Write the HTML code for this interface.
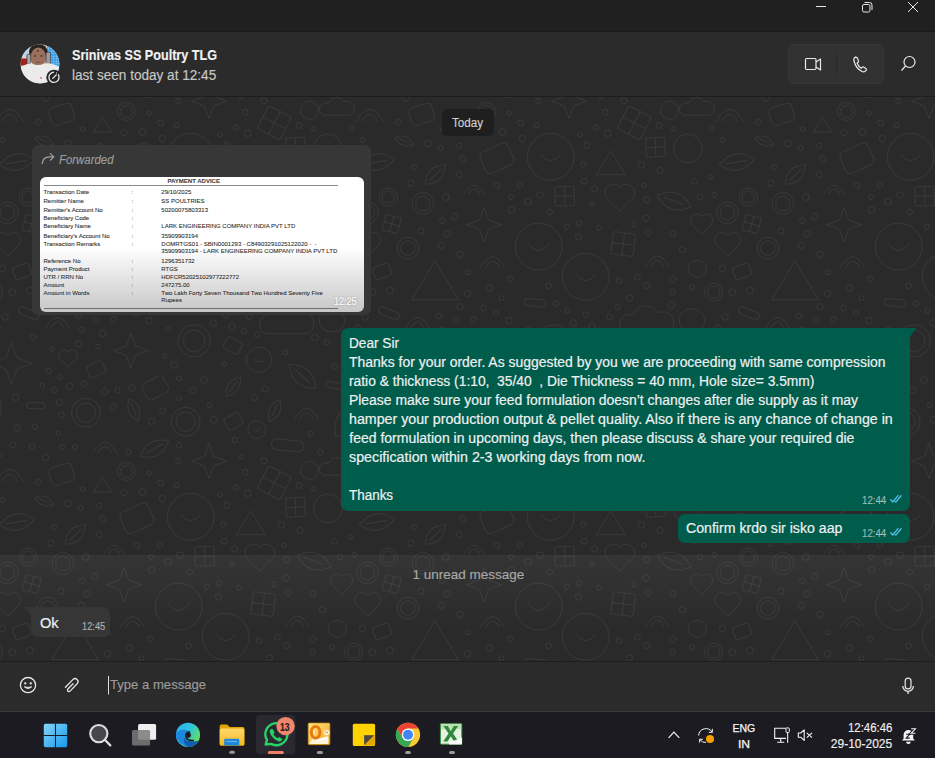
<!DOCTYPE html>
<html><head><meta charset="utf-8">
<style>
*{margin:0;padding:0;box-sizing:border-box}
html,body{width:935px;height:758px;overflow:hidden;background:#292929;font-family:"Liberation Sans",sans-serif}
.abs{position:absolute}
.t{position:absolute;white-space:pre;line-height:1;transform-origin:0 0;-webkit-text-stroke-width:0.15px}
svg{position:absolute;overflow:visible}
#titlebar{left:0;top:0;width:935px;height:32px;background:#202020;border-bottom:1px solid #1b1b1b}
#header{left:0;top:32px;width:935px;height:65px;background:#2b2b2b;border-bottom:1px solid #1d1d1d}
#chat{left:0;top:97px;width:935px;height:564px;background:#2a2a2a;overflow:hidden}
#composer{left:0;top:661px;width:935px;height:50px;background:#2b2b2b;border-top:1px solid #1e1e1e}
#taskbar{left:0;top:711px;width:935px;height:47px;background:#1c1b22;border-top:1px solid #3a3a3e}
.msg{color:#edf0f1;font-size:14px;-webkit-text-stroke:0.2px #edf0f1}
.time{color:rgba(233,237,239,.6);font-size:11px;transform:scaleX(0.88)}
.doc{color:#2a2a2a;font-size:6px;-webkit-text-stroke:0.08px #2a2a2a}
</style></head><body>
<!-- title bar -->
<div id="titlebar" class="abs"></div>
<svg style="left:0;top:0" width="935" height="32">
  <line x1="816" y1="6.5" x2="826" y2="6.5" stroke="#e6e6e6" stroke-width="1"/>
  <rect x="862.5" y="4.5" width="7.5" height="7.5" rx="1.5" fill="none" stroke="#e6e6e6" stroke-width="1"/>
  <path d="M864.5 2.5 h5 a2.5 2.5 0 0 1 2.5 2.5 v5" fill="none" stroke="#e6e6e6" stroke-width="1"/>
  <path d="M908 2 L918 12 M918 2 L908 12" stroke="#e6e6e6" stroke-width="1"/>
</svg>
<!-- header -->
<div id="header" class="abs"></div>
<svg style="left:0;top:0" width="100" height="96">
  <defs><clipPath id="av"><circle cx="40" cy="64" r="19.4"/></clipPath>
  <pattern id="dots" width="2.5" height="2.5" patternUnits="userSpaceOnUse"><rect width="2.5" height="2.5" fill="#3d9ee6"/><circle cx="1.25" cy="1.25" r="0.6" fill="#bfe0f5"/></pattern></defs>
  <g clip-path="url(#av)">
    <rect x="20" y="44" width="40" height="40" fill="#d4d6d8"/>
    <path d="M20 44 h12 l-4 10 l-8 4z" fill="#b9d3e6"/>
    <rect x="47" y="44" width="14" height="28" fill="url(#dots)"/>
    <rect x="20" y="58.5" width="7" height="7" fill="#a8201c"/>
    <path d="M29 52 q1 -8 9 -8 q9 0 10 9 l-1 3 h-17z" fill="#2a221e"/>
    <ellipse cx="38.3" cy="57.5" rx="7.8" ry="10" fill="#9a705c"/>
    <circle cx="37.8" cy="51" r="0.9" fill="#3a3a44"/>
    <ellipse cx="35" cy="56" rx="1.2" ry="0.8" fill="#3a2a24"/>
    <ellipse cx="41.5" cy="56" rx="1.2" ry="0.8" fill="#3a2a24"/>
    <path d="M35.5 62 q2.5 1 5 0" stroke="#6a4a40" stroke-width="0.8" fill="none"/>
    <rect x="26.9" y="54.2" width="3.8" height="9.5" rx="1.5" fill="#a6a6a6" stroke="#333" stroke-width="0.7"/>
    <rect x="46" y="52" width="4.6" height="13.5" rx="1.8" fill="#9a9a9a" stroke="#333" stroke-width="0.7"/>
    <path d="M20 68 q6 -5 12 -4.5 q6 3 12 0 q8 -1 16 4 v16 h-40z" fill="#ecebeb"/>
    <path d="M20 72 q3 4 5 9" stroke="#444" stroke-width="1.5" fill="none"/>
    <circle cx="41" cy="78" r="0.8" fill="#b03030"/>
  </g>
  <circle cx="53.9" cy="77.3" r="7.6" fill="#262626"/>
  <path d="M58.2 74.4 A5.1 5.1 0 1 1 54 72.2" fill="none" stroke="#ececec" stroke-width="1.3"/>
  <circle cx="56.6" cy="72.9" r="0.55" fill="#ececec"/><circle cx="58.6" cy="75" r="0.55" fill="#ececec"/>
  <line x1="52.8" y1="78.4" x2="56.3" y2="74.9" stroke="#ececec" stroke-width="1.3" stroke-linecap="round"/>
</svg>
<div class="t" style="left:72px;top:48px;font-size:14px;font-weight:bold;color:#f2f2f2;transform:scaleX(0.9)">Srinivas SS Poultry TLG</div>
<div class="t" style="left:72px;top:68px;font-size:14px;color:#c8c8c8;transform:scaleX(0.97)">last seen today at 12:45</div>
<div class="abs" style="left:788px;top:44px;width:96px;height:40px;background:#323232;border:1px solid #373737;border-radius:5px"></div>
<div class="abs" style="left:836px;top:52px;width:1px;height:24px;background:#2a2a2a"></div>
<svg style="left:0;top:0" width="935" height="96">
  <rect x="805.5" y="58.5" width="10.5" height="11" rx="1.2" fill="none" stroke="#eaeaea" stroke-width="1.2"/>
  <path d="M816 62 l4.5 -3 v11 l-4.5 -3" fill="none" stroke="#eaeaea" stroke-width="1.2" stroke-linejoin="round"/>
  <path d="M855.5 57 c-1.5 0.5 -2 2 -1.5 4 c1 4 4 8.5 8 10.5 c1.5 0.7 3 0.3 3.8 -0.8 l0.5 -0.8 c0.3 -0.5 0.1 -1.1 -0.4 -1.4 l-2.3 -1.4 c-0.5 -0.3 -1 -0.2 -1.4 0.2 l-0.8 0.9 c-2 -1 -3.5 -3 -4.3 -5.2 l1 -0.7 c0.5 -0.3 0.6 -0.9 0.4 -1.4 l-1.1 -2.7 c-0.2 -0.6 -0.8 -0.9 -1.4 -0.7 z" fill="none" stroke="#eaeaea" stroke-width="1.2"/>
  <circle cx="909.5" cy="62" r="5.5" fill="none" stroke="#eaeaea" stroke-width="1.2"/>
  <line x1="905.5" y1="66" x2="901.5" y2="70.5" stroke="#eaeaea" stroke-width="1.2"/>
</svg>
<!-- chat -->
<div id="chat" class="abs"></div>
<svg style="left:0;top:97px" width="935" height="564"><defs><pattern id="dd" width="360" height="360" patternUnits="userSpaceOnUse"><g fill="none" stroke="#383838" stroke-width="1"><circle cx="224.2" cy="267.0" r="2.4"/><g transform="rotate(42 302.5 279.3)"><path d="M284.5 279.3 q18.0 -16.2 36.0 0 q-18.0 16.2 -36.0 0z M291.7 279.3 h21.6"/></g><rect x="225.1" y="317.8" width="17.0" height="13.0" rx="3.0" transform="rotate(-29 233.6 324.3)"/><g transform="rotate(69 133.8 312.6)"><path d="M121.8 312.6 q12.0 -10.8 24.0 0 q-12.0 10.8 -24.0 0z M126.6 312.6 h14.4"/></g><circle cx="195.8" cy="206.6" r="2.8"/><g transform="rotate(7 263.2 146.9)"><rect x="252.0" y="135.7" width="22.4" height="22.4" rx="2"/><path d="M263.2 135.7 v22.4 M252.0 146.9 h22.4"/></g><g transform="rotate(28 274.3 25.9)"><rect x="261.5" y="13.1" width="25.6" height="25.6" rx="2"/><path d="M274.3 13.1 v25.6 M261.5 25.9 h25.6"/></g><g transform="rotate(28 274.3 385.9)"><rect x="261.5" y="373.1" width="25.6" height="25.6" rx="2"/><path d="M274.3 373.1 v25.6 M261.5 385.9 h25.6"/></g><circle cx="45.6" cy="0.6" r="3.3"/><circle cx="45.6" cy="360.6" r="3.3"/><g transform="rotate(137 75.4 77.6)"><path d="M61.4 77.6 q14.0 -12.6 28.0 0 q-14.0 12.6 -28.0 0z M67.0 77.6 h16.8"/></g><g transform="rotate(19 314.1 104.1)"><path d="M296.1 104.1 q18.0 -16.2 36.0 0 q-18.0 16.2 -36.0 0z M303.3 104.1 h21.6"/></g><circle cx="194.1" cy="244.0" r="16.2"/><circle cx="194.1" cy="244.0" r="10.8"/><g transform="rotate(125 348.0 321.7)"><path d="M326.0 321.7 q22.0 -19.8 44.0 0 q-22.0 19.8 -44.0 0z M334.8 321.7 h26.4"/></g><g transform="rotate(125 -12.0 321.7)"><path d="M-34.0 321.7 q22.0 -19.8 44.0 0 q-22.0 19.8 -44.0 0z M-25.2 321.7 h26.4"/></g><path d="M7.8 159.2 l-11.2 -11.2 a5.6 5.6 0 0 1 11.2 -9.8 a5.6 5.6 0 0 1 11.2 9.8z" stroke-linejoin="round"/><path d="M367.8 159.2 l-11.2 -11.2 a5.6 5.6 0 0 1 11.2 -9.8 a5.6 5.6 0 0 1 11.2 9.8z" stroke-linejoin="round"/><circle cx="95.0" cy="119.5" r="3.2"/><path d="M250.7 53.7 L265.1 77.7 L236.3 77.7z" stroke-linejoin="round"/><path d="M341.7 137.2 l-9.6 -9.6 a4.8 4.8 0 0 1 9.6 -8.4 a4.8 4.8 0 0 1 9.6 8.4z" stroke-linejoin="round"/><path d="M-18.3 137.2 l-9.6 -9.6 a4.8 4.8 0 0 1 9.6 -8.4 a4.8 4.8 0 0 1 9.6 8.4z" stroke-linejoin="round"/><g transform="rotate(170 16.8 65.1)"><path d="M-1.2 65.1 q18.0 -16.2 36.0 0 q-18.0 16.2 -36.0 0z M6.0 65.1 h21.6"/></g><g transform="rotate(170 376.8 65.1)"><path d="M358.8 65.1 q18.0 -16.2 36.0 0 q-18.0 16.2 -36.0 0z M366.0 65.1 h21.6"/></g><polygon points="141.6,127.7 128.6,132.4 124.0,145.3 119.3,132.4 106.4,127.7 119.3,123.1 124.0,110.1 128.6,123.1" stroke-linejoin="round"/><circle cx="309.5" cy="13.2" r="9.0"/><circle cx="309.5" cy="373.2" r="9.0"/><path d="M75.1 163.8 L98.5 202.8 L51.7 202.8z" stroke-linejoin="round"/><path d="M265.6 236.7 a9.9 9.9 0 0 1 7.7 -18.7 a13.2 13.2 0 0 1 24.2 -2.2 a9.9 9.9 0 0 1 9.9 20.9z"/><rect x="18.3" y="212.6" width="21.6" height="7.2" rx="3.6" transform="rotate(22 29.1 216.2)"/><rect x="378.3" y="212.6" width="21.6" height="7.2" rx="3.6" transform="rotate(22 389.1 216.2)"/><polygon points="32.3,266.6 17.0,272.1 11.5,287.4 5.9,272.1 -9.3,266.6 5.9,261.1 11.5,245.8 17.0,261.1" stroke-linejoin="round"/><polygon points="392.3,266.6 377.0,272.1 371.5,287.4 365.9,272.1 350.7,266.6 365.9,261.1 371.5,245.8 377.0,261.1" stroke-linejoin="round"/><path d="M285.5 170.0 q12.0 -21.6 24.0 0 M290.3 170.0 q7.2 -13.2 14.4 0"/><circle cx="60.8" cy="134.3" r="3.1"/><path d="M319.3 223.3 c0 -15.4 25.2 -15.4 25.2 0 s-25.2 15.4 -25.2 0z"/><path d="M-40.7 223.3 c0 -15.4 25.2 -15.4 25.2 0 s-25.2 15.4 -25.2 0z"/><circle cx="225.7" cy="179.8" r="23.4"/><path d="M215.3 177.2 q10.4 13.0 20.8 0"/><polygon points="148.4,253.6 135.5,258.3 130.8,271.2 126.2,258.3 113.2,253.6 126.2,248.9 130.8,236.0 135.5,248.9" stroke-linejoin="round"/><polygon points="226.6,4.2 213.7,8.8 209.0,21.8 204.4,8.8 191.4,4.2 204.4,-0.5 209.0,-13.4 213.7,-0.5" stroke-linejoin="round"/><polygon points="226.6,364.2 213.7,368.8 209.0,381.8 204.4,368.8 191.4,364.2 204.4,359.5 209.0,346.6 213.7,359.5" stroke-linejoin="round"/><circle cx="190.6" cy="59.8" r="23.4"/><path d="M180.2 57.2 q10.4 13.0 20.8 0"/><path d="M328.5 171.8 c0 -11.0 18.0 -11.0 18.0 0 s-18.0 11.0 -18.0 0z"/><path d="M-31.5 171.8 c0 -11.0 18.0 -11.0 18.0 0 s-18.0 11.0 -18.0 0z"/><circle cx="259.1" cy="262.9" r="12.6"/><path d="M253.5 261.5 q5.6 7.0 11.2 0"/><circle cx="78.9" cy="246.9" r="3.0"/><circle cx="219.1" cy="126.4" r="2.8"/><g transform="rotate(151 154.5 351.6)"><path d="M138.5 351.6 q16.0 -14.4 32.0 0 q-16.0 14.4 -32.0 0z M144.9 351.6 h19.2"/></g><g transform="rotate(151 154.5 -8.4)"><path d="M138.5 -8.4 q16.0 -14.4 32.0 0 q-16.0 14.4 -32.0 0z M144.9 -8.4 h19.2"/></g><path d="M92.9 356.1 q12.0 -21.6 24.0 0 M97.7 356.1 q7.2 -13.2 14.4 0"/><path d="M92.9 -3.9 q12.0 -21.6 24.0 0 M97.7 -3.9 q7.2 -13.2 14.4 0"/><circle cx="178.7" cy="149.6" r="23.4"/><path d="M168.3 147.0 q10.4 13.0 20.8 0"/><path d="M259.7 114.1 l-12.8 -12.8 a6.4 6.4 0 0 1 12.8 -11.2 a6.4 6.4 0 0 1 12.8 11.2z" stroke-linejoin="round"/><circle cx="327.8" cy="51.4" r="14.4"/><g transform="rotate(21 44.4 44.0)"><path d="M34.4 44.0 q10.0 -9.0 20.0 0 q-10.0 9.0 -20.0 0z M38.4 44.0 h12.0"/></g><circle cx="235.8" cy="30.7" r="2.6"/><circle cx="85.9" cy="315.7" r="14.4"/><circle cx="85.9" cy="315.7" r="9.6"/><g transform="rotate(-3 295.4 50.3)"><rect x="285.8" y="40.7" width="19.2" height="19.2" rx="2"/><path d="M295.4 40.7 v19.2 M285.8 50.3 h19.2"/></g><g transform="rotate(126 233.2 289.6)"><path d="M221.2 289.6 q12.0 -10.8 24.0 0 q-12.0 10.8 -24.0 0z M226.0 289.6 h14.4"/></g><circle cx="142.4" cy="34.9" r="3.3"/><circle cx="179.1" cy="281.4" r="2.5"/><rect x="164.4" y="202.1" width="21.6" height="7.2" rx="3.6" transform="rotate(5 175.2 205.7)"/><rect x="271.4" y="343.0" width="32.4" height="10.8" rx="5.4" transform="rotate(5 287.6 348.4)"/><rect x="271.4" y="-17.0" width="32.4" height="10.8" rx="5.4" transform="rotate(5 287.6 -11.6)"/><circle cx="151.4" cy="113.0" r="3.2"/><circle cx="12.3" cy="195.3" r="3.4"/><circle cx="372.3" cy="195.3" r="3.4"/><path d="M-4.1 25.2 q14.0 -25.2 28.0 0 M1.5 25.2 q8.4 -15.4 16.8 0"/><path d="M-4.1 385.2 q14.0 -25.2 28.0 0 M1.5 385.2 q8.4 -15.4 16.8 0"/><path d="M355.9 25.2 q14.0 -25.2 28.0 0 M361.5 25.2 q8.4 -15.4 16.8 0"/><path d="M355.9 385.2 q14.0 -25.2 28.0 0 M361.5 385.2 q8.4 -15.4 16.8 0"/><rect x="49.8" y="8.3" width="23.8" height="18.2" rx="4.2" transform="rotate(-17 61.7 17.4)"/><rect x="49.8" y="368.3" width="23.8" height="18.2" rx="4.2" transform="rotate(-17 61.7 377.4)"/><circle cx="132.0" cy="291.2" r="3.3"/><circle cx="288.1" cy="135.5" r="3.1"/><path d="M102.3 20.0 L111.3 35.0 L93.3 35.0z" stroke-linejoin="round"/><path d="M102.3 380.0 L111.3 395.0 L93.3 395.0z" stroke-linejoin="round"/><circle cx="334.5" cy="84.4" r="2.8"/><circle cx="-25.5" cy="84.4" r="2.8"/><rect x="224.2" y="242.0" width="17.0" height="13.0" rx="3.0" transform="rotate(28 232.7 248.5)"/><rect x="13.6" y="168.0" width="17.0" height="13.0" rx="3.0" transform="rotate(-22 22.1 174.5)"/><rect x="373.6" y="168.0" width="17.0" height="13.0" rx="3.0" transform="rotate(-22 382.1 174.5)"/><circle cx="256.7" cy="332.7" r="9.0"/><path d="M252.7 331.7 q4.0 5.0 8.0 0"/><circle cx="256.7" cy="-27.3" r="9.0"/><path d="M252.7 -28.3 q4.0 5.0 8.0 0"/><circle cx="69.8" cy="289.3" r="3.2"/><circle cx="277.5" cy="180.1" r="2.9"/><path d="M323.5 18.2 a6.3 6.3 0 0 1 4.9 -11.9 a8.4 8.4 0 0 1 15.4 -1.4 a6.3 6.3 0 0 1 6.3 13.3z"/><path d="M323.5 378.2 a6.3 6.3 0 0 1 4.9 -11.9 a8.4 8.4 0 0 1 15.4 -1.4 a6.3 6.3 0 0 1 6.3 13.3z"/><path d="M-36.5 18.2 a6.3 6.3 0 0 1 4.9 -11.9 a8.4 8.4 0 0 1 15.4 -1.4 a6.3 6.3 0 0 1 6.3 13.3z"/><path d="M-36.5 378.2 a6.3 6.3 0 0 1 4.9 -11.9 a8.4 8.4 0 0 1 15.4 -1.4 a6.3 6.3 0 0 1 6.3 13.3z"/><g transform="rotate(-1 204.7 99.2)"><rect x="195.1" y="89.6" width="19.2" height="19.2" rx="2"/><path d="M204.7 89.6 v19.2 M195.1 99.2 h19.2"/></g><circle cx="249.7" cy="220.0" r="2.9"/><circle cx="185.7" cy="324.7" r="14.4"/><circle cx="185.7" cy="324.7" r="9.6"/><g transform="rotate(15 31.8 127.0)"><rect x="23.8" y="119.0" width="16.0" height="16.0" rx="2"/><path d="M31.8 119.0 v16.0 M23.8 127.0 h16.0"/></g><rect x="26.9" y="305.8" width="18.0" height="6.0" rx="3.0" transform="rotate(2 35.9 308.8)"/><rect x="121.6" y="49.6" width="30.6" height="23.4" rx="5.4" transform="rotate(-25 136.9 61.3)"/><circle cx="47.8" cy="151.2" r="10.8"/><circle cx="47.8" cy="151.2" r="7.2"/><g transform="rotate(115 274.6 313.5)"><path d="M262.6 313.5 q12.0 -10.8 24.0 0 q-12.0 10.8 -24.0 0z M267.4 313.5 h14.4"/></g><circle cx="141.6" cy="201.2" r="2.5"/><path d="M45.5 231.3 q12.0 -21.6 24.0 0 M50.3 231.3 q7.2 -13.2 14.4 0"/><circle cx="12.8" cy="347.7" r="3.2"/><circle cx="12.8" cy="-12.3" r="3.2"/><circle cx="372.8" cy="347.7" r="3.2"/><circle cx="372.8" cy="-12.3" r="3.2"/><circle cx="102.4" cy="236.3" r="3.3"/><circle cx="315.1" cy="240.4" r="3.5"/><circle cx="58.4" cy="336.3" r="2.2"/><circle cx="58.4" cy="-23.7" r="2.2"/><rect x="143.4" y="281.8" width="23.8" height="18.2" rx="4.2" transform="rotate(-28 155.3 290.9)"/><circle cx="203.8" cy="282.8" r="3.4"/><circle cx="322.3" cy="152.7" r="3.1"/><circle cx="265.4" cy="292.0" r="3.0"/><circle cx="100.1" cy="157.3" r="3.3"/><circle cx="327.1" cy="245.1" r="2.7"/><circle cx="61.4" cy="318.3" r="2.9"/><circle cx="354.3" cy="97.7" r="2.3"/><circle cx="-5.7" cy="97.7" r="2.3"/><circle cx="227.0" cy="48.2" r="3.1"/><circle cx="126.5" cy="14.5" r="9.0"/><circle cx="126.5" cy="14.5" r="6.0"/><circle cx="126.5" cy="374.5" r="9.0"/><circle cx="126.5" cy="374.5" r="6.0"/><path d="M120.5 170.5 q12.0 -21.6 24.0 0 M125.3 170.5 q7.2 -13.2 14.4 0"/><circle cx="5.1" cy="219.9" r="3.2"/><circle cx="365.1" cy="219.9" r="3.2"/><path d="M68.1 269.8 l-8.0 -8.0 a4.0 4.0 0 0 1 8.0 -7.0 a4.0 4.0 0 0 1 8.0 7.0z" stroke-linejoin="round"/><circle cx="113.4" cy="222.2" r="2.7"/><circle cx="178.3" cy="4.0" r="2.7"/><circle cx="178.3" cy="364.0" r="2.7"/><circle cx="28.4" cy="100.1" r="9.0"/><circle cx="28.4" cy="100.1" r="6.0"/><circle cx="388.4" cy="100.1" r="9.0"/><circle cx="388.4" cy="100.1" r="6.0"/><circle cx="34.9" cy="329.7" r="2.6"/><circle cx="281.4" cy="67.8" r="3.5"/><circle cx="103.0" cy="61.8" r="3.2"/><circle cx="312.5" cy="195.3" r="2.9"/><circle cx="149.1" cy="223.6" r="3.2"/><rect x="87.6" y="265.9" width="17.0" height="13.0" rx="3.0" transform="rotate(-26 96.1 272.4)"/><circle cx="311.0" cy="336.8" r="2.5"/><circle cx="311.0" cy="-23.2" r="2.5"/><path d="M104.1 97.3 q10.0 -18.0 20.0 0 M108.1 97.3 q6.0 -11.0 12.0 0"/><circle cx="350.8" cy="80.2" r="2.2"/><circle cx="-9.2" cy="80.2" r="2.2"/><circle cx="300.0" cy="73.4" r="3.1"/><circle cx="85.9" cy="100.1" r="3.3"/><circle cx="162.6" cy="313.9" r="3.0"/><circle cx="159.8" cy="88.0" r="2.8"/><circle cx="207.4" cy="213.5" r="2.5"/><circle cx="351.4" cy="30.8" r="2.5"/><circle cx="-8.6" cy="30.8" r="2.5"/><circle cx="312.8" cy="136.9" r="3.0"/><circle cx="150.0" cy="182.0" r="3.0"/><circle cx="241.1" cy="359.8" r="2.2"/><circle cx="241.1" cy="-0.2" r="2.2"/><circle cx="128.3" cy="355.0" r="2.6"/><circle cx="128.3" cy="-5.0" r="2.6"/><circle cx="257.6" cy="210.0" r="2.7"/><circle cx="335.1" cy="269.4" r="2.7"/><circle cx="-24.9" cy="269.4" r="2.7"/><circle cx="189.8" cy="114.9" r="2.7"/><circle cx="7.4" cy="115.7" r="10.8"/><circle cx="7.4" cy="115.7" r="7.2"/><circle cx="367.4" cy="115.7" r="10.8"/><circle cx="367.4" cy="115.7" r="7.2"/><circle cx="99.3" cy="48.6" r="2.5"/><circle cx="168.1" cy="232.5" r="2.3"/><circle cx="67.9" cy="46.3" r="3.3"/><circle cx="254.2" cy="300.5" r="3.1"/><circle cx="168.0" cy="104.7" r="3.4"/><circle cx="62.9" cy="106.5" r="10.8"/><circle cx="62.9" cy="106.5" r="7.2"/><circle cx="224.1" cy="84.4" r="2.9"/><circle cx="82.3" cy="123.8" r="2.8"/><circle cx="54.0" cy="70.4" r="2.6"/><circle cx="245.3" cy="15.3" r="2.9"/><circle cx="245.3" cy="375.3" r="2.9"/><circle cx="209.5" cy="308.2" r="2.3"/><circle cx="231.8" cy="107.1" r="2.2"/><circle cx="340.1" cy="99.9" r="2.9"/><circle cx="-19.9" cy="99.9" r="2.9"/><circle cx="136.6" cy="88.6" r="2.9"/><circle cx="117.7" cy="293.3" r="2.5"/><circle cx="48.5" cy="274.1" r="2.7"/><circle cx="75.0" cy="350.0" r="2.5"/><circle cx="75.0" cy="-10.0" r="2.5"/><circle cx="259.0" cy="183.7" r="2.8"/><circle cx="32.1" cy="349.0" r="2.8"/><circle cx="32.1" cy="-11.0" r="2.8"/><path d="M294.6 322.3 q12.0 -21.6 24.0 0 M299.4 322.3 q7.2 -13.2 14.4 0"/><circle cx="160.5" cy="26.0" r="3.0"/><circle cx="160.5" cy="386.0" r="3.0"/><circle cx="99.8" cy="209.8" r="3.2"/><circle cx="174.1" cy="267.9" r="3.4"/><circle cx="353.6" cy="195.3" r="9.0"/><circle cx="353.6" cy="195.3" r="6.0"/><circle cx="-6.4" cy="195.3" r="9.0"/><circle cx="-6.4" cy="195.3" r="6.0"/><circle cx="286.1" cy="120.9" r="3.2"/><rect x="325.7" y="285.3" width="18.0" height="6.0" rx="3.0" transform="rotate(11 334.7 288.3)"/><rect x="-34.3" y="285.3" width="18.0" height="6.0" rx="3.0" transform="rotate(11 -25.3 288.3)"/><circle cx="51.0" cy="86.2" r="3.2"/><circle cx="286.7" cy="188.7" r="3.0"/><circle cx="244.3" cy="234.1" r="2.6"/><circle cx="81.1" cy="148.3" r="3.2"/><circle cx="32.9" cy="240.1" r="2.9"/><circle cx="86.9" cy="136.9" r="3.4"/><circle cx="82.9" cy="32.1" r="2.4"/><circle cx="218.6" cy="139.9" r="3.2"/><circle cx="162.2" cy="41.8" r="3.2"/><circle cx="232.1" cy="229.8" r="3.3"/><circle cx="107.9" cy="175.2" r="2.5"/><circle cx="60.4" cy="279.8" r="2.3"/><circle cx="359.9" cy="357.6" r="2.3"/><circle cx="359.9" cy="-2.4" r="2.3"/><circle cx="-0.1" cy="357.6" r="2.3"/><circle cx="-0.1" cy="-2.4" r="2.3"/><circle cx="269.4" cy="200.9" r="3.2"/><circle cx="51.8" cy="252.2" r="2.2"/><circle cx="179.1" cy="348.3" r="2.6"/><circle cx="179.1" cy="-11.7" r="2.6"/><circle cx="213.2" cy="226.0" r="3.3"/><circle cx="176.5" cy="28.2" r="2.6"/><circle cx="176.5" cy="388.2" r="2.6"/><circle cx="107.5" cy="196.8" r="3.3"/><circle cx="234.8" cy="343.0" r="2.8"/><circle cx="234.8" cy="-17.0" r="2.8"/><circle cx="192.8" cy="293.1" r="3.1"/><circle cx="149.0" cy="16.3" r="2.3"/><circle cx="149.0" cy="376.3" r="2.3"/><circle cx="136.0" cy="216.2" r="2.6"/><circle cx="213.9" cy="322.7" r="3.4"/><circle cx="113.4" cy="310.0" r="3.2"/><circle cx="263.9" cy="3.8" r="2.9"/><circle cx="263.9" cy="363.8" r="2.9"/><circle cx="17.2" cy="331.3" r="3.3"/><circle cx="17.2" cy="-28.7" r="3.3"/><circle cx="377.2" cy="331.3" r="3.3"/><circle cx="377.2" cy="-28.7" r="3.3"/><circle cx="179.9" cy="98.3" r="3.3"/><circle cx="312.7" cy="182.4" r="3.2"/><circle cx="257.3" cy="237.8" r="2.8"/><circle cx="84.4" cy="286.9" r="2.7"/><circle cx="220.0" cy="37.3" r="2.5"/><circle cx="54.5" cy="292.8" r="2.9"/><circle cx="95.6" cy="223.5" r="2.9"/><circle cx="30.0" cy="193.8" r="3.3"/><circle cx="390.0" cy="193.8" r="3.3"/><circle cx="81.4" cy="232.8" r="2.9"/><circle cx="38.8" cy="25.3" r="2.8"/><circle cx="38.8" cy="385.3" r="2.8"/><circle cx="238.8" cy="130.5" r="2.4"/><circle cx="129.2" cy="191.0" r="3.3"/><circle cx="15.6" cy="300.4" r="3.3"/><circle cx="375.6" cy="300.4" r="3.3"/><circle cx="320.1" cy="355.6" r="2.7"/><circle cx="320.1" cy="-4.4" r="2.7"/><circle cx="285.2" cy="255.3" r="2.6"/><circle cx="2.3" cy="43.0" r="2.3"/><circle cx="362.3" cy="43.0" r="2.3"/><circle cx="284.0" cy="88.3" r="2.4"/><circle cx="104.3" cy="294.9" r="3.4"/><circle cx="247.8" cy="36.2" r="3.4"/><circle cx="179.3" cy="301.0" r="2.4"/><circle cx="311.4" cy="207.8" r="3.5"/><circle cx="59.5" cy="305.7" r="3.2"/><circle cx="357.7" cy="230.6" r="2.8"/><circle cx="-2.3" cy="230.6" r="2.8"/><circle cx="151.6" cy="324.5" r="3.1"/><circle cx="332.0" cy="190.0" r="2.7"/><circle cx="-28.0" cy="190.0" r="2.7"/><circle cx="234.7" cy="91.8" r="3.2"/><circle cx="206.8" cy="129.7" r="2.6"/><circle cx="313.9" cy="31.8" r="2.3"/><circle cx="299.1" cy="28.5" r="2.9"/><circle cx="299.1" cy="388.5" r="2.9"/><circle cx="61.9" cy="350.1" r="2.6"/><circle cx="61.9" cy="-9.9" r="2.6"/><circle cx="42.4" cy="288.7" r="2.3"/><circle cx="80.4" cy="51.1" r="2.5"/><circle cx="287.0" cy="102.9" r="3.1"/><circle cx="225.7" cy="217.7" r="2.9"/><circle cx="123.6" cy="211.1" r="2.9"/><circle cx="98.1" cy="249.6" r="2.3"/><circle cx="164.6" cy="259.1" r="2.2"/><circle cx="274.5" cy="127.1" r="2.6"/><circle cx="223.3" cy="67.6" r="2.5"/><circle cx="78.7" cy="218.9" r="2.9"/><circle cx="151.0" cy="99.8" r="2.4"/><circle cx="344.8" cy="245.8" r="2.9"/><circle cx="-15.2" cy="245.8" r="2.9"/><circle cx="99.4" cy="77.7" r="2.9"/><circle cx="2.7" cy="171.5" r="3.3"/><circle cx="362.7" cy="171.5" r="3.3"/><circle cx="188.5" cy="188.9" r="2.8"/><circle cx="123.8" cy="35.4" r="3.2"/></g></pattern></defs><rect width="935" height="564" fill="url(#dd)"/></svg>
<div class="abs" style="left:0;top:555px;width:935px;height:75px;background:linear-gradient(to bottom,rgba(255,255,255,0.05),rgba(255,255,255,0.0))"></div>
<!-- today pill -->
<div class="abs" style="left:442px;top:109px;width:52px;height:27px;background:#1f1f1f;border-radius:5px"></div>
<div class="t" style="left:451.8px;top:116.6px;font-size:12px;color:#d0d0d0;transform:scaleX(0.97)">Today</div>
<!-- forwarded card -->
<div class="abs" style="left:32px;top:145px;width:339px;height:170px;background:#373737;border-radius:6px"></div>
<svg style="left:0;top:0" width="100" height="200">
  <path d="M42.3 163.5 c0.3 -4.2 3.2 -6.6 7.2 -6.6 h4.3 M50.3 153.6 l3.6 3.3 l-3.6 3.3" fill="none" stroke="#a0a0a0" stroke-width="1.25" stroke-linecap="round" stroke-linejoin="round"/>
</svg>
<div class="t" style="left:59px;top:153.5px;font-size:12px;font-style:italic;color:#9d9d9d;transform:scaleX(0.95)">Forwarded</div>
<div class="abs" style="left:40px;top:177px;width:324px;height:135px;background:#ffffff;border-radius:6px;overflow:hidden">
  <div class="abs" style="left:0;top:70px;width:324px;height:65px;background:linear-gradient(to bottom,rgba(0,0,0,0),rgba(0,0,0,0.22))"></div>
</div>
<div class="abs" style="left:44px;top:184.5px;width:294px;height:1.3px;background:#8a8a8a"></div>
<div class="abs" style="left:44px;top:307.8px;width:294px;height:1.3px;background:#6e6e6e"></div>
<div class="t doc" style="left:167.5px;top:177.5px;font-weight:bold;color:#444">PAYMENT ADVICE</div>
<div class="t doc" style="left:43.5px;top:189.4px">Transaction Date</div><div class="t doc" style="left:131.5px;top:189.4px">:</div>
<div class="t doc" style="left:161.3px;top:189.4px">29/10/2025</div>
<div class="t doc" style="left:43.5px;top:197.9px">Remitter Name</div><div class="t doc" style="left:131.5px;top:197.9px">:</div>
<div class="t doc" style="left:161.3px;top:197.9px">SS POULTRIES</div>
<div class="t doc" style="left:43.5px;top:207.1px">Remitter's Account No</div><div class="t doc" style="left:131.5px;top:207.1px">:</div>
<div class="t doc" style="left:161.3px;top:207.1px">50200075803313</div>
<div class="t doc" style="left:43.5px;top:215.2px">Beneficiary Code</div><div class="t doc" style="left:131.5px;top:215.2px">:</div>
<div class="t doc" style="left:43.5px;top:223.3px">Beneficiary Name</div><div class="t doc" style="left:131.5px;top:223.3px">:</div>
<div class="t doc" style="left:161.3px;top:223.3px">LARK ENGINEERING COMPANY INDIA PVT LTD</div>
<div class="t doc" style="left:43.5px;top:232.5px">Beneficiary's Account No</div><div class="t doc" style="left:131.5px;top:232.5px">:</div>
<div class="t doc" style="left:161.3px;top:232.5px">35909903194</div>
<div class="t doc" style="left:43.5px;top:241.4px">Transaction Remarks</div><div class="t doc" style="left:131.5px;top:241.4px">:</div>
<div class="t doc" style="left:161.3px;top:241.4px">DOMRTGS01 - SBIN0001293 - C84903291025122020 -  -</div>
<div class="t doc" style="left:161.3px;top:247.9px">35909903194 - LARK ENGINEERING COMPANY INDIA PVT LTD</div>
<div class="t doc" style="left:43.5px;top:257.5px">Reference No</div><div class="t doc" style="left:131.5px;top:257.5px">:</div>
<div class="t doc" style="left:161.3px;top:257.5px">1296351732</div>
<div class="t doc" style="left:43.5px;top:265.6px">Payment Product</div><div class="t doc" style="left:131.5px;top:265.6px">:</div>
<div class="t doc" style="left:161.3px;top:265.6px">RTGS</div>
<div class="t doc" style="left:43.5px;top:274.1px">UTR / RRN No</div><div class="t doc" style="left:131.5px;top:274.1px">:</div>
<div class="t doc" style="left:161.3px;top:274.1px">HDFCR52025102977222772</div>
<div class="t doc" style="left:43.5px;top:282.2px">Amount</div><div class="t doc" style="left:131.5px;top:282.2px">:</div>
<div class="t doc" style="left:161.3px;top:282.2px">247275.00</div>
<div class="t doc" style="left:43.5px;top:290.3px">Amount in Words</div><div class="t doc" style="left:131.5px;top:290.3px">:</div>
<div class="t doc" style="left:161.3px;top:290.3px">Two Lakh Forty Seven Thousand Two Hundred Seventy Five</div>
<div class="t doc" style="left:161.3px;top:297.1px">Rupees</div>
<div class="t" style="left:334px;top:296.8px;font-size:10px;color:#fff;transform:scaleX(0.9);text-shadow:0 0 2px rgba(0,0,0,.4)">12:25</div>
<!-- green bubble -->
<div class="abs" style="left:341px;top:328px;width:569px;height:182.5px;background:#005c4b;border-radius:7px 0 7px 7px"></div>
<svg style="left:0;top:0" width="935" height="400"><path d="M909 328 H916.5 L910 337 H909 Z" fill="#005c4b"/></svg>
<div class="t msg" style="left:349.3px;top:336.3px;transform:scaleX(0.973)">Dear Sir</div>
<div class="t msg" style="left:349.3px;top:355.3px;transform:scaleX(0.995)">Thanks for your order. As suggested by you we are proceeding with same compression</div>
<div class="t msg" style="left:349.3px;top:374.3px;transform:scaleX(0.986)">ratio &amp; thickness (1:10,  35/40  , Die Thickness = 40 mm, Hole size= 3.5mm)</div>
<div class="t msg" style="left:349.3px;top:393.3px;transform:scaleX(0.994)">Please make sure your feed formulation doesn’t changes after die supply as it may</div>
<div class="t msg" style="left:349.3px;top:412.3px;transform:scaleX(1.016)">hamper your production output &amp; pellet quality. Also if there is any chance of change in</div>
<div class="t msg" style="left:349.3px;top:431.3px;transform:scaleX(1.0)">feed formulation in upcoming days, then please discuss &amp; share your required die</div>
<div class="t msg" style="left:349.3px;top:450.3px;transform:scaleX(1.019)">specification within 2-3 working days from now.</div>
<div class="t msg" style="left:349.3px;top:488.3px;transform:scaleX(0.96)">Thanks</div>
<div class="t time" style="left:861.5px;top:494.5px">12:44</div>

<div class="abs" style="left:678px;top:513.5px;width:232px;height:29.5px;background:#005c4b;border-radius:7px"></div>
<div class="t msg" style="left:685.6px;top:521px;transform:scaleX(1.01)">Confirm krdo sir isko aap</div>
<div class="t time" style="left:861.5px;top:527.5px">12:44</div>
<svg style="left:0;top:0" width="935" height="560">
  <path d="M890.8 499.8 l2 2.2 l5.2 -6.4 M895.3 501.6 l0.5 0.5 l5.2 -6.4" fill="none" stroke="#53bdeb" stroke-width="1.35" stroke-linecap="round" stroke-linejoin="round"/>
  <path d="M890.8 532.8 l2 2.2 l5.2 -6.4 M895.3 534.6 l0.5 0.5 l5.2 -6.4" fill="none" stroke="#53bdeb" stroke-width="1.35" stroke-linecap="round" stroke-linejoin="round"/>
</svg>
<!-- unread -->
<div class="t" style="left:412.5px;top:567.5px;font-size:13.5px;color:#a8a8a8">1 unread message</div>
<!-- ok bubble -->
<div class="abs" style="left:31px;top:607px;width:79px;height:30px;background:#363636;border-radius:0 7px 7px 7px"></div>
<svg style="left:0;top:0" width="100" height="700"><path d="M32 607 H25.3 L31 615.5 H32 Z" fill="#363636"/></svg>
<div class="t msg" style="left:39.8px;top:615.6px;transform:scaleX(1.04)">Ok</div>
<div class="t time" style="left:81.6px;top:621.8px;font-size:10px;transform:scaleX(0.93)">12:45</div>

<!-- composer -->
<div id="composer" class="abs"></div>
<svg style="left:0;top:0" width="935" height="711">
  <circle cx="28" cy="685.1" r="7.6" fill="none" stroke="#e6e6e6" stroke-width="1.3"/>
  <path d="M25.2 682 v2.6 M23.9 683.3 h2.6 M30.8 682 v2.6 M29.5 683.3 h2.6" stroke="#e6e6e6" stroke-width="1"/>
  <path d="M24.3 686.8 q3.7 3.2 7.4 0 q-3.7 1.3 -7.4 0 z" fill="#e6e6e6" stroke="#e6e6e6" stroke-width="1" stroke-linejoin="round"/>
  <g transform="translate(71.5 685.3) rotate(-46)">
    <path d="M-5.6 -3 H5 A3 3 0 0 1 5 3 H-5.2 A1.5 1.5 0 0 1 -5.2 0 H2.2" fill="none" stroke="#e6e6e6" stroke-width="1.3" stroke-linecap="round"/>
  </g>
  <line x1="108.5" y1="676" x2="108.5" y2="694.5" stroke="#dcdcdc" stroke-width="1"/>
  <rect x="905.2" y="678.2" width="5.8" height="10.6" rx="2.9" fill="none" stroke="#e6e6e6" stroke-width="1.2"/>
  <path d="M902.8 686 a5.3 5.3 0 0 0 10.6 0 M908.1 691.3 v2.6" fill="none" stroke="#e6e6e6" stroke-width="1.3"/>
</svg>
<div class="t" style="left:109.5px;top:678px;font-size:13.5px;color:#9c9c9c;transform:scaleX(0.97)">Type a message</div>

<!-- taskbar -->
<div id="taskbar" class="abs"></div>
<svg style="left:0;top:0" width="935" height="758">
  <defs>
    <linearGradient id="win" x1="0" y1="0" x2="1" y2="1"><stop offset="0" stop-color="#86d6f8"/><stop offset="1" stop-color="#1598ee"/></linearGradient>
    <linearGradient id="edge1" x1="0.1" y1="0.2" x2="1" y2="0.7"><stop offset="0" stop-color="#2fb4f0"/><stop offset="0.45" stop-color="#2ec6d6"/><stop offset="1" stop-color="#6ce055"/></linearGradient>
    <linearGradient id="fold" x1="0" y1="0" x2="0" y2="1"><stop offset="0" stop-color="#ffd86a"/><stop offset="1" stop-color="#f4b824"/></linearGradient>
    <linearGradient id="olk" x1="0" y1="0" x2="1" y2="1"><stop offset="0" stop-color="#ffe68a"/><stop offset="1" stop-color="#f1a81a"/></linearGradient>
  </defs>
  <!-- windows -->
  <rect x="43.8" y="723.8" width="23.4" height="23.4" rx="1.6" fill="url(#win)"/>
  <path d="M55.5 723.5 v24 M43.5 735.5 h24" stroke="#1c1b22" stroke-width="1.1"/>
  <!-- search -->
  <circle cx="98.8" cy="733.6" r="8.6" fill="#48464d" stroke="#dedede" stroke-width="2.1"/>
  <line x1="104.8" y1="739.8" x2="110.3" y2="745.4" stroke="#dedede" stroke-width="2.3" stroke-linecap="round"/>
  <!-- task view -->
  <rect x="138.1" y="724" width="18" height="15.7" rx="1.5" fill="#efefef"/>
  <rect x="132" y="730" width="18.1" height="15.5" rx="1.5" fill="#7a7a7a" fill-opacity="0.85"/>
  <!-- edge -->
  <circle cx="188" cy="734.9" r="12.1" fill="url(#edge1)"/>
  <path d="M176.1 734 C177.5 729.5 184 728.2 190.2 731.8 C186.5 732.2 184.6 734.8 184.8 737.6 C185.3 741.6 192 743 198.6 740.4 A12.25 12.25 0 0 1 175.95 734 Z" fill="#1c86dc"/>
  <path d="M184.8 737.6 C185.3 741.6 192 743 198.6 740.4 C196.5 744.5 192.5 747 188 747 C184 745.5 182.8 740 184.8 737.6 Z" fill="#0f5fb4"/>
  <path d="M190.2 731.8 C187 731.8 185.5 734 185.8 736.5 C186.5 739.5 190 740.8 194 740.6" fill="none" stroke="#1c1b22" stroke-width="1.6"/>
  <ellipse cx="188.6" cy="735.2" rx="2.3" ry="2.6" fill="#1c1b22"/>
  <!-- folder -->
  <path d="M219.7 726 a1.5 1.5 0 0 1 1.5 -1.5 h6 l2.5 2.5 h13.2 a1.5 1.5 0 0 1 1.5 1.5 v15.5 a1.5 1.5 0 0 1 -1.5 1.5 h-21.7 a1.5 1.5 0 0 1 -1.5 -1.5z" fill="#e0a500"/>
  <rect x="219.7" y="728.5" width="24.6" height="17" rx="1.5" fill="url(#fold)"/>
  <rect x="224.2" y="738.8" width="15.1" height="6.7" rx="1.2" fill="#1f86d8"/>
  <rect x="226.5" y="741" width="10.5" height="1" fill="#62b4f0"/>
  <rect x="229.3" y="750.8" width="5.6" height="3" rx="1.5" fill="#9a9a9a"/>
  <!-- whatsapp tile -->
  <rect x="256" y="714.9" width="39.4" height="39.4" rx="4" fill="#2a2930"/>
  <g transform="translate(0.4 1.2)"><path d="M265.3 743.3 l1.3 -4.6 a11 11 0 1 1 4.2 4 z" fill="none" stroke="#25d366" stroke-width="2.4" stroke-linejoin="round"/></g>
  <g transform="translate(276.5 735) scale(1.15) translate(-275.2 -733.5)"><path d="M270.5 728.5 c-1 0.8 -1.2 2.3 -0.5 3.8 c1.2 2.8 3.5 5 6.5 6.3 c1.3 0.5 2.6 0.2 3.2 -0.8 l0.4 -0.7 l-2.6 -1.5 l-1.2 1 c-1.8 -0.8 -3.3 -2.3 -4.1 -4 l1 -1.2 l-1.3 -2.7 z" fill="#25d366" stroke="#25d366" stroke-width="0.6" stroke-linejoin="round"/></g>
  
  <circle cx="285.6" cy="726.1" r="9.2" fill="#f0876c"/>
  <rect x="267.8" y="751" width="16.1" height="3" rx="1.5" fill="#f0826a"/>
  <!-- outlook -->
  <rect x="308.2" y="723" width="21.7" height="21.7" rx="1.2" fill="url(#olk)" stroke="#c8860a" stroke-width="0.7"/>
  <path d="M309 743.9 l4 -6 l8 1.5 l7.5 -2.5 v7z" fill="#fff6da"/>
  <path d="M316 739.5 l12 -3.5 l-1 3 l-10 2.5z" fill="#ffffff"/>
  <ellipse cx="315.6" cy="732.3" rx="4.3" ry="5.9" fill="none" stroke="#e87a12" stroke-width="3"/>
  <path d="M314.2 730 q-1 2.5 0.5 4.5" stroke="#fff4d0" stroke-width="1.2" fill="none"/>
  <circle cx="326.6" cy="732.6" r="3.2" fill="#fff3c8" stroke="#eab040" stroke-width="0.5"/>
  <path d="M325.3 731.4 l1.4 1.6 l1.3 -1.2" stroke="#d0622a" stroke-width="0.8" fill="none"/>
  <rect x="316.9" y="751" width="6.1" height="3" rx="1.5" fill="#9a9a9a"/>
  <!-- sticky -->
  <rect x="352.8" y="723.8" width="22.3" height="22.3" rx="1.5" fill="#ffd200"/>
  <path d="M364.2 735.2 h10.9 v8.8 a1.5 1.5 0 0 1 -1.5 1.5 h-9.4z" fill="#e6a600"/>
  <path d="M364.2 735.2 h9.8 l-9.8 9.8z" fill="#474747"/>
  <!-- chrome -->
  <circle cx="408" cy="734.8" r="12.15" fill="#fcc934"/>
  <path d="M418.39 728.50 A12.15 12.15 0 0 0 397.35 728.95 L402.54 737.95 L408 734.8 L408.00 728.50 Z" fill="#ea4335"/>
  <path d="M397.35 728.95 A12.15 12.15 0 0 0 408.26 746.95 L413.46 737.95 L408 734.8 L402.54 737.95 Z" fill="#34a853"/>
  <circle cx="408" cy="734.8" r="6.3" fill="#ffffff"/>
  <circle cx="408" cy="734.8" r="5" fill="#4285f4"/>
  <rect x="405.2" y="751" width="5.6" height="3" rx="1.5" fill="#9a9a9a"/>
  <!-- excel -->
  <rect x="440.4" y="723.6" width="21.4" height="20.6" rx="1" fill="#e6f3e2" stroke="#3b8a45" stroke-width="1"/>
  <path d="M441 724.2 h20.4 v5 h-20.4z" fill="#9fd39a" fill-opacity="0.6"/>
  <path d="M443.5 726 h4.3 l3 5 l3 -5 h4.3 l-5 7.5 l5.3 8 h-4.3 l-3.3 -5.3 l-3.3 5.3 h-4.3 l5.3 -8z" fill="#2f8a3c"/>
  <path d="M449 742.5 l13 -5 v7 h-13z" fill="#ffffff" fill-opacity="0.9"/>
  <rect x="449" y="751" width="5.9" height="3" rx="1.5" fill="#9a9a9a"/>
  <!-- tray -->
  <path d="M668.6 737.8 l5.3 -5.6 l5.4 5.6" fill="none" stroke="#f2f2f2" stroke-width="1.2"/>
  <path d="M698.6 735.5 a7.3 7.3 0 0 1 13.6 -3.2 M712.3 728.8 v3.5 h-3.5" fill="none" stroke="#f2f2f2" stroke-width="1"/>
  <path d="M706 742.5 a7.3 7.3 0 0 1 -6.3 -3 M699.6 742.6 v-3.3 h3.3" fill="none" stroke="#f2f2f2" stroke-width="1"/>
  <circle cx="710" cy="738.9" r="4" fill="#f7a000"/>
  <path d="M786 728.2 h-11.3 v10.2 h11.3" fill="none" stroke="#f2f2f2" stroke-width="1.1"/>
  <path d="M777.2 742.3 h7 M780.7 738.5 v3.8" stroke="#f2f2f2" stroke-width="1.1"/>
  <rect x="786" y="727.9" width="3.3" height="4.6" rx="0.8" fill="none" stroke="#f2f2f2" stroke-width="1"/>
  <path d="M787.65 732.5 v10.3" stroke="#f2f2f2" stroke-width="1.1"/>
  <path d="M798.3 733 h2.3 l3.6 -3.2 v10.6 l-3.6 -3.2 h-2.3z" fill="none" stroke="#f2f2f2" stroke-width="1.1" stroke-linejoin="round"/>
  <path d="M806.8 732.8 l5.2 4.8 M812 732.8 l-5.2 4.8" stroke="#f2f2f2" stroke-width="1.1"/>
  <path d="M902 740.6 l1.6 -2.2 v-3.6 a4.8 4.8 0 0 1 9.6 0 v3.6 l1.6 2.2z" fill="#f4f4f4"/>
  <path d="M906.1 741.8 a2.3 2.3 0 0 0 4.6 0z" fill="#f4f4f4"/>
  <path d="M906.2 734.2 h3.6 l-3.6 3.9 h3.6" fill="none" stroke="#1c1b22" stroke-width="1.1"/>
  <path d="M911.2 728.8 h4.2 l-4.2 4.4 h4.2" fill="none" stroke="#1c1b22" stroke-width="3"/>
  <path d="M911.2 728.8 h4.2 l-4.2 4.4 h4.2" fill="none" stroke="#f4f4f4" stroke-width="1.1"/>
</svg>
<div class="t" style="left:280.4px;top:721.8px;font-size:10.5px;font-weight:bold;color:#2a1a18;transform:scaleX(0.82)">13</div>
<div class="t" style="left:732.5px;top:723px;font-size:10.5px;color:#f4f4f4;-webkit-text-stroke:0.25px #f4f4f4">ENG</div>
<div class="t" style="left:737.8px;top:738.8px;font-size:10.5px;color:#f4f4f4;-webkit-text-stroke:0.25px #f4f4f4;transform:scaleX(1.15)">IN</div>
<div class="t" style="left:848.3px;top:722px;font-size:12px;color:#f0f0f0;transform:scaleX(0.95)">12:46:46</div>
<div class="t" style="left:830.8px;top:737.8px;font-size:12px;color:#f0f0f0">29-10-2025</div>

</body></html>
